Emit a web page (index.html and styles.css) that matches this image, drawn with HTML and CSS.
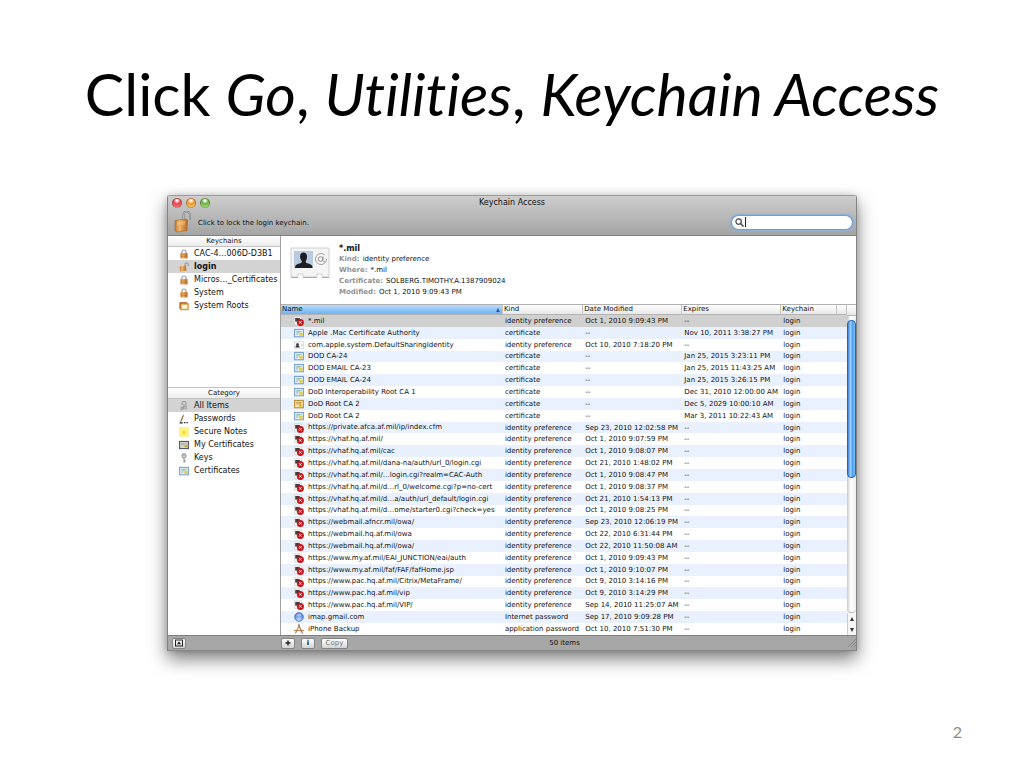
FILE: index.html
```html
<!DOCTYPE html>
<html lang="en">
<head>
<meta charset="utf-8">
<title>Click Go, Utilities, Keychain Access</title>
<link rel="stylesheet" href="styles.css">
</head>
<body>
<svg class="defs" aria-hidden="true">
  <defs>
    <linearGradient id="gold" x1="0" x2="1"><stop offset="0" stop-color="#c87a2c"/><stop offset=".35" stop-color="#efb56c"/><stop offset="1" stop-color="#b96a22"/></linearGradient>
    <radialGradient id="globe" cx=".5" cy=".75" r=".7"><stop offset="0" stop-color="#c4dcff"/><stop offset="1" stop-color="#3b6fd0"/></radialGradient>
    <symbol id="lock" viewBox="0 0 10 10"><path d="M3 5V3a2 2 0 0 1 4 0v2" fill="none" stroke="#999" stroke-width="1.2"/><rect x="1.5" y="4" width="7" height="5.4" rx=".5" fill="url(#gold)"/><path d="M1.5 6h7M1.5 7.6h7" stroke="#a9622a" stroke-width=".4"/></symbol>
    <symbol id="unlock" viewBox="0 0 10 10"><path d="M6 5V2.4a1.6 1.6 0 0 1 3.2 0V4" fill="none" stroke="#888" stroke-width="1"/><path d="M.6 4.4l6.4-.6.4 5-6.4.8z" fill="url(#gold)"/></symbol>
    <symbol id="roots" viewBox="0 0 12 10"><rect x=".6" y=".6" width="9" height="8" rx="1" fill="#b4471c"/><rect x="1.6" y="1.6" width="9.6" height="8" rx=".6" fill="#e4a63a" stroke="#a8641c" stroke-width=".6"/><rect x="3.4" y="3.6" width="6.6" height="4.8" fill="#fff8e4"/></symbol>
    <symbol id="all" viewBox="0 0 10 10"><path d="M3 4V2.4a2 2 0 0 1 4 0V9M5 4.4L3 9M5 3v5" fill="none" stroke="#999" stroke-width="1.1"/><circle cx="3" cy="7.4" r="1.4" fill="#bbb" stroke="#888" stroke-width=".6"/></symbol>
    <symbol id="pass" viewBox="0 0 10 10"><path d="M4.6.6L1.4 8.4" stroke="#b58b4b" stroke-width="1.1"/><path d="M4.2 2L2 7" stroke="#444" stroke-width=".6"/><path d="M.6 8.8h3.2M5 8.6h1.4M7.4 8.6h1.4" stroke="#222" stroke-width="1.3"/></symbol>
    <symbol id="note" viewBox="0 0 10 10"><rect x=".4" y=".4" width="9.2" height="9.2" fill="#fff47c" stroke="#efe58a" stroke-width=".5"/><path d="M3.4 4.4h3.2v2.8H3.4zM4 4.4a1 1 0 0 1 2 0" fill="#f5d93c"/></symbol>
    <symbol id="mycert" viewBox="0 0 10 10"><rect x=".6" y="1.4" width="8.8" height="7.2" fill="#d6d8c8" stroke="#444b5c"/><path d="M2 3.4h6M2 4.8h4" stroke="#8b98ac" stroke-width=".6"/><circle cx="7" cy="6.2" r="1.4" fill="#cfa92c"/></symbol>
    <symbol id="key" viewBox="0 0 10 10"><circle cx="5" cy="2.8" r="2.1" fill="#ddd" stroke="#8b8b8b"/><path d="M5 5v4.6M5 7.2h1.6M5 8.8h1.4" stroke="#8b8b8b"/><path d="M4.4 2.2h1.2" stroke="#666" stroke-width=".8"/></symbol>
    <symbol id="cert" viewBox="0 0 10 10"><rect x=".6" y="1.4" width="8.8" height="7.4" fill="#e4efff" stroke="#7099cf"/><path d="M2.2 3.4h5.6M2.2 4.8h3.6M2.2 6.2h2" stroke="#7fae82" stroke-width=".7"/><circle cx="7" cy="6.2" r="1.7" fill="#e6cf31"/></symbol>
    <symbol id="goldcert" viewBox="0 0 10 10"><rect x=".6" y="1.4" width="8.8" height="7.4" fill="#f8e3a0" stroke="#b9882c"/><path d="M2.2 3.4h5.6M2.2 4.8h5" stroke="#a8823a" stroke-width=".7"/><circle cx="6.4" cy="6.4" r="1.5" fill="#e9b52c"/></symbol>
    <symbol id="card" viewBox="0 0 10 10"><rect x=".4" y="1.4" width="9.2" height="7.4" fill="#fff" stroke="#ccc" stroke-width=".6"/><path d="M1.4 7.400c0-1.400.8-1.600 1.200-1.800a1.300 1.500 0 1 1 1.800 0c.6.2 1.200.5 1.200 1.800z" fill="#333"/><path d="M6.800 5h2" stroke="#999" stroke-width=".7"/></symbol>
    <symbol id="bad" viewBox="0 0 10 10"><path d="M.3.700h7.400v8H.3z" fill="#f3f3f3" stroke="#ccc" stroke-width=".6"/><path d="M1.200 2h4.600v3.600H1.200z" fill="#4a3a3c"/><circle cx="6.400" cy="6.400" r="3.500" fill="#c4151c"/><path d="M5.200 5.200l2.400 2.400M7.600 5.200L5.200 7.600" stroke="#fff" stroke-width="1"/></symbol>
    <symbol id="at" viewBox="0 0 10 10"><circle cx="5" cy="5" r="4.4" fill="url(#globe)" stroke="#3c62ad" stroke-width=".6"/><ellipse cx="5" cy="2.8" rx="2.6" ry="1.5" fill="#fff" opacity=".4"/></symbol>
    <symbol id="app" viewBox="0 0 10 10"><path d="M5.6.6L1.4 9.4" stroke="#d08d4c" stroke-width="1.2"/><path d="M4.4.6l4.2 8.8" stroke="#8f6a5a" stroke-width="1.1"/><path d="M0 6.6h10" stroke="#b97945" stroke-width="1"/></symbol>
  </defs>
</svg>
<main class="slide">
  <h1 class="slide-title">Click <em>Go</em>, <em>Utilities</em>, <em>Keychain Access</em></h1>

  <section class="window" aria-label="Keychain Access">
    <header class="toolbar">
      <div class="titlebar">
        <div class="lights">
          <button class="light red" aria-label="Close"></button>
          <button class="light amber" aria-label="Minimize"></button>
          <button class="light green" aria-label="Zoom"></button>
        </div>
        <h2 class="window-title">Keychain Access</h2>
      </div>
      <div class="tools">
        <button class="lock-button">
          <svg class="big-lock" viewBox="0 0 20 22" aria-hidden="true"><path d="M9.500 10V3.800a3.200 3.200 0 0 1 6.400 0V9" fill="none" stroke="#777" stroke-width="1.800"/><path d="M9.500 10V3.800a3.200 3.200 0 0 1 6.400 0V9" fill="none" stroke="#d4d4d4" stroke-width=".7"/><path d="M1 9.500l10-1.500 2.500 1-.5 10.500-10 1.500-2-1.500z" fill="url(#gold)" stroke="#9c5a1e" stroke-width=".5"/><path d="M3 11l8-1v3.500L3 14.500z" fill="#f8cb8b" opacity=".5"/></svg>
          <span>Click to lock the login keychain.</span>
        </button>
        <label class="search">
          <svg viewBox="0 0 10 10" aria-hidden="true"><circle cx="4" cy="4" r="3" fill="none" stroke="#444" stroke-width="1.300"/><path d="M6 6l3.500 3.500" stroke="#444" stroke-width="1.600"/></svg>
          <span class="caret"></span>
          <input type="text" aria-label="Search">
        </label>
      </div>
    </header>

    <div class="body">
      <nav class="sidebar">
        <section class="keychains">
          <h3 class="side-head">Keychains</h3>
          <ul class="side-list">
            <li><a href="#"><svg><use href="#lock"/></svg>CAC-4…006D-D3B1</a></li>
            <li><a href="#" class="current strong"><svg><use href="#unlock"/></svg>login</a></li>
            <li><a href="#"><svg><use href="#lock"/></svg>Micros…_Certificates</a></li>
            <li><a href="#"><svg><use href="#lock"/></svg>System</a></li>
            <li><a href="#"><svg><use href="#roots"/></svg>System Roots</a></li>
          </ul>
        </section>
        <section class="category">
          <h3 class="side-head">Category</h3>
          <ul class="side-list">
            <li><a href="#" class="current"><svg><use href="#all"/></svg>All Items</a></li>
            <li><a href="#"><svg><use href="#pass"/></svg>Passwords</a></li>
            <li><a href="#"><svg><use href="#note"/></svg>Secure Notes</a></li>
            <li><a href="#"><svg><use href="#mycert"/></svg>My Certificates</a></li>
            <li><a href="#"><svg><use href="#key"/></svg>Keys</a></li>
            <li><a href="#"><svg><use href="#cert"/></svg>Certificates</a></li>
          </ul>
        </section>
      </nav>

      <div class="content">
        <section class="detail">
          <svg class="detail-icon" viewBox="0 0 40 32" aria-hidden="true"><path d="M1 1h38v29h-7v-3h-5v3H13v-3H8v3H1z" fill="#f4f4f4" stroke="#d0d0d0"/><path d="M1 30.500h7M13 30.500h14M32 30.500h7" stroke="#aaa"/><rect x="4" y="4" width="19" height="17" fill="#b8cbe0"/><path d="M5 21c0-3 2-4 6-5l1-1.500C9 11 9.500 5.500 13.500 5.500S18 11 15.500 14.500l1 1.500c4 1 6 2 6 5z" fill="#1c1e22"/><circle cx="31" cy="12" r="5.500" fill="none" stroke="#999" stroke-width=".9" stroke-dasharray="29 6"/><circle cx="30.500" cy="12" r="2.300" fill="none" stroke="#888" stroke-width=".9"/><path d="M33.300 9.500l-.6 4q.5 2 2.300.5" fill="none" stroke="#888" stroke-width=".9"/></svg>
          <div>
            <h3 class="detail-name">*.mil</h3>
            <dl class="facts">
              <div><dt>Kind:</dt><dd>identity preference</dd></div>
              <div><dt>Where:</dt><dd>*.mil</dd></div>
              <div><dt>Certificate:</dt><dd>SOLBERG.TIMOTHY.A.1387909024</dd></div>
              <div><dt>Modified:</dt><dd>Oct 1, 2010 9:09:43 PM</dd></div>
            </dl>
          </div>
        </section>

        <div class="list">
          <table class="items">
            <colgroup><col class="c-name"><col class="c-kind"><col class="c-date"><col class="c-date"><col class="c-chain"><col class="c-end"></colgroup>
            <thead><tr><th class="sorted"><span>Name</span></th><th>Kind</th><th>Date Modified</th><th>Expires</th><th>Keychain</th><th></th></tr></thead>
            <tbody>
              <tr class="selected"><td><svg><use href="#bad"/></svg>*.mil</td><td>identity preference</td><td>Oct 1, 2010 9:09:43 PM</td><td>--</td><td>login</td><td></td></tr>
              <tr><td><svg><use href="#cert"/></svg>Apple .Mac Certificate Authority</td><td>certificate</td><td>--</td><td>Nov 10, 2011 3:38:27 PM</td><td>login</td><td></td></tr>
              <tr><td><svg><use href="#card"/></svg>com.apple.system.DefaultSharingIdentity</td><td>identity preference</td><td>Oct 10, 2010 7:18:20 PM</td><td>--</td><td>login</td><td></td></tr>
              <tr><td><svg><use href="#cert"/></svg>DOD CA-24</td><td>certificate</td><td>--</td><td>Jan 25, 2015 3:23:11 PM</td><td>login</td><td></td></tr>
              <tr><td><svg><use href="#cert"/></svg>DOD EMAIL CA-23</td><td>certificate</td><td>--</td><td>Jan 25, 2015 11:43:25 AM</td><td>login</td><td></td></tr>
              <tr><td><svg><use href="#cert"/></svg>DOD EMAIL CA-24</td><td>certificate</td><td>--</td><td>Jan 25, 2015 3:26:15 PM</td><td>login</td><td></td></tr>
              <tr><td><svg><use href="#cert"/></svg>DoD Interoperability Root CA 1</td><td>certificate</td><td>--</td><td>Dec 31, 2010 12:00:00 AM</td><td>login</td><td></td></tr>
              <tr><td><svg><use href="#goldcert"/></svg>DoD Root CA 2</td><td>certificate</td><td>--</td><td>Dec 5, 2029 10:00:10 AM</td><td>login</td><td></td></tr>
              <tr><td><svg><use href="#cert"/></svg>DoD Root CA 2</td><td>certificate</td><td>--</td><td>Mar 3, 2011 10:22:43 AM</td><td>login</td><td></td></tr>
              <tr><td><svg><use href="#bad"/></svg>https://private.afca.af.mil/ip/index.cfm</td><td>identity preference</td><td>Sep 23, 2010 12:02:58 PM</td><td>--</td><td>login</td><td></td></tr>
              <tr><td><svg><use href="#bad"/></svg>https://vhaf.hq.af.mil/</td><td>identity preference</td><td>Oct 1, 2010 9:07:59 PM</td><td>--</td><td>login</td><td></td></tr>
              <tr><td><svg><use href="#bad"/></svg>https://vhaf.hq.af.mil/cac</td><td>identity preference</td><td>Oct 1, 2010 9:08:07 PM</td><td>--</td><td>login</td><td></td></tr>
              <tr><td><svg><use href="#bad"/></svg>https://vhaf.hq.af.mil/dana-na/auth/url_0/login.cgi</td><td>identity preference</td><td>Oct 21, 2010 1:48:02 PM</td><td>--</td><td>login</td><td></td></tr>
              <tr><td><svg><use href="#bad"/></svg>https://vhaf.hq.af.mil/…login.cgi?realm=CAC-Auth</td><td>identity preference</td><td>Oct 1, 2010 9:08:47 PM</td><td>--</td><td>login</td><td></td></tr>
              <tr><td><svg><use href="#bad"/></svg>https://vhaf.hq.af.mil/d…rl_0/welcome.cgi?p=no-cert</td><td>identity preference</td><td>Oct 1, 2010 9:08:37 PM</td><td>--</td><td>login</td><td></td></tr>
              <tr><td><svg><use href="#bad"/></svg>https://vhaf.hq.af.mil/d…a/auth/url_default/login.cgi</td><td>identity preference</td><td>Oct 21, 2010 1:54:13 PM</td><td>--</td><td>login</td><td></td></tr>
              <tr><td><svg><use href="#bad"/></svg>https://vhaf.hq.af.mil/d…ome/starter0.cgi?check=yes</td><td>identity preference</td><td>Oct 1, 2010 9:08:25 PM</td><td>--</td><td>login</td><td></td></tr>
              <tr><td><svg><use href="#bad"/></svg>https://webmail.afncr.mil/owa/</td><td>identity preference</td><td>Sep 23, 2010 12:06:19 PM</td><td>--</td><td>login</td><td></td></tr>
              <tr><td><svg><use href="#bad"/></svg>https://webmail.hq.af.mil/owa</td><td>identity preference</td><td>Oct 22, 2010 6:31:44 PM</td><td>--</td><td>login</td><td></td></tr>
              <tr><td><svg><use href="#bad"/></svg>https://webmail.hq.af.mil/owa/</td><td>identity preference</td><td>Oct 22, 2010 11:50:08 AM</td><td>--</td><td>login</td><td></td></tr>
              <tr><td><svg><use href="#bad"/></svg>https://www.my.af.mil/EAI_JUNCTION/eai/auth</td><td>identity preference</td><td>Oct 1, 2010 9:09:43 PM</td><td>--</td><td>login</td><td></td></tr>
              <tr><td><svg><use href="#bad"/></svg>https://www.my.af.mil/faf/FAF/fafHome.jsp</td><td>identity preference</td><td>Oct 1, 2010 9:10:07 PM</td><td>--</td><td>login</td><td></td></tr>
              <tr><td><svg><use href="#bad"/></svg>https://www.pac.hq.af.mil/Citrix/MetaFrame/</td><td>identity preference</td><td>Oct 9, 2010 3:14:16 PM</td><td>--</td><td>login</td><td></td></tr>
              <tr><td><svg><use href="#bad"/></svg>https://www.pac.hq.af.mil/vip</td><td>identity preference</td><td>Oct 9, 2010 3:14:29 PM</td><td>--</td><td>login</td><td></td></tr>
              <tr><td><svg><use href="#bad"/></svg>https://www.pac.hq.af.mil/VIP/</td><td>identity preference</td><td>Sep 14, 2010 11:25:07 AM</td><td>--</td><td>login</td><td></td></tr>
              <tr><td><svg><use href="#at"/></svg>imap.gmail.com</td><td>Internet password</td><td>Sep 17, 2010 9:09:28 PM</td><td>--</td><td>login</td><td></td></tr>
              <tr><td><svg><use href="#app"/></svg>iPhone Backup</td><td>application password</td><td>Oct 10, 2010 7:51:30 PM</td><td>--</td><td>login</td><td></td></tr>
            </tbody>
          </table>
          <div class="scroll">
            <div class="scroll-corner"></div>
            <div class="track"><div class="thumb"></div></div>
            <button class="arrow" aria-label="Scroll up"><svg viewBox="0 0 4 4"><path d="M2 0l2 4H0z"/></svg></button>
            <button class="arrow" aria-label="Scroll down"><svg viewBox="0 0 4 4"><path d="M2 4L0 0h4z"/></svg></button>
          </div>
        </div>
      </div>
    </div>

    <footer class="statusbar">
      <div class="status-side">
        <button class="tool" aria-label="Hide keychains"><svg viewBox="0 0 8 8"><rect x=".5" y="1" width="7" height="6" fill="none" stroke="#222"/><path d="M4 2.200l2 3H2z" fill="#222"/></svg></button>
      </div>
      <div class="status-main">
        <button class="tool" aria-label="Add"><svg viewBox="0 0 8 8"><path d="M4 1.500v5M1.500 4h5" stroke="#222" stroke-width="1.400"/></svg></button>
        <button class="tool info">i</button>
        <button class="tool copy" disabled>Copy</button>
      </div>
      <span class="count">50 items</span>
      <svg class="grip" viewBox="0 0 8 8" aria-hidden="true"><path d="M0 8l8-8M3 8l5-5M6 8l2-2" stroke="#7b7b7b" stroke-width=".7"/></svg>
    </footer>
  </section>

  <p class="page-number">2</p>
</main>
</body>
</html>
```
FILE: styles.css
```css
* { box-sizing: border-box; }

body {
  margin: 0;
  background: #fff;
  color: #111;
  font: 7px/11px "DejaVu Sans", sans-serif;
}

h1, h2, h3, p, ul, dl, dd { margin: 0; padding: 0; }

button {
  margin: 0;
  padding: 0;
  border: 0;
  background: none;
  color: inherit;
  font: inherit;
}

svg { display: block; }

.defs { position: absolute; width: 0; height: 0; }

.slide {
  display: flex;
  flex-direction: column;
  min-height: 100vh;
  padding: 58px 62px 24px;
}

.slide-title {
  color: #000;
  font: 400 59px/72px Lato, sans-serif;
  font-variant-ligatures: none;
  text-align: center;
}

.page-number {
  margin-top: auto;
  color: #8b8b8b;
  font: 16px/24px Lato, sans-serif;
  text-align: right;
}

/* Window frame */
.window {
  margin: 65px 105px 0;
  border: 1px solid #858585;
  border-top-color: #9c9c9c;
  border-radius: 3px 3px 0 0;
  background: #fff;
  box-shadow: 0 8px 18px rgba(0, 0, 0, .5), 0 0 6px rgba(0, 0, 0, .15);
}

.toolbar {
  border-bottom: 1px solid #808080;
  border-radius: 2px 2px 0 0;
  background: linear-gradient(#cdcdcd, #a5a5a5);
}

.titlebar {
  display: grid;
  grid-template-columns: 1fr auto 1fr;
  align-items: center;
  padding: 1px 4px 0;
}

.lights { display: flex; gap: 4px; }

.light {
  width: 10px;
  height: 10px;
  border: 1px solid rgba(70, 40, 20, .4);
  border-radius: 50%;
}

.red { background: radial-gradient(circle at 50% 20%, #fff 5%, #e8414a 45%, #ff8d83); }
.amber { background: radial-gradient(circle at 50% 20%, #fff 5%, #f0952c 45%, #ffe17a); }
.green { background: radial-gradient(circle at 50% 20%, #fff 5%, #5fb238 45%, #c5f58a); }

.window-title { font-size: 8px; font-weight: 400; line-height: 12px; }

.tools {
  display: flex;
  align-items: center;
  justify-content: space-between;
  height: 26px;
  padding: 0 4px 0 6px;
}

.lock-button { display: flex; align-items: center; gap: 4px; }
.lock-button span { padding-top: 3px; }
.big-lock { width: 20px; height: 22px; }

.search {
  display: flex;
  align-items: center;
  width: 120px;
  height: 13px;
  padding: 0 3px;
  border-radius: 7px;
  background: #fff;
  box-shadow: 0 0 0 1px #6f9fd4, 0 0 2px 2px #86b1e0;
}

.search svg { width: 9px; height: 9px; }
.caret { width: 1px; height: 10px; margin-left: 1px; background: #222; }

.search input {
  flex: 1;
  min-width: 0;
  height: 11px;
  padding: 0 2px;
  border: 0;
  outline: 0;
  background: none;
  font: inherit;
}

.body { display: flex; }

/* Sidebar */
.sidebar {
  display: flex;
  flex-direction: column;
  flex: 0 0 113px;
  border-right: 1px solid #a0a0a0;
}

.keychains { flex: 0 0 151px; }

.side-head {
  border-bottom: 1px solid #c4c4c4;
  background: linear-gradient(#fff, #ececec);
  font-size: 7px;
  font-weight: 400;
  line-height: 10px;
  text-align: center;
}

.category .side-head { border-top: 1px solid #c4c4c4; }

.side-list { list-style: none; }

.side-list a {
  display: flex;
  align-items: center;
  gap: 5px;
  padding-left: 11px;
  color: #111;
  font-size: 8px;
  line-height: 13px;
  text-decoration: none;
  white-space: nowrap;
}

.side-list svg { width: 10px; height: 10px; }
.side-list .current { background: #d3d3d3; }
.side-list .strong { font-weight: 700; }

/* Selected item summary */
.content { display: flex; flex: 1; flex-direction: column; min-width: 0; }

.detail {
  display: flex;
  gap: 9px;
  height: 68px;
  padding: 7px 9px;
}

.detail-icon { width: 40px; height: 32px; margin-top: 4px; }
.detail-name { font-size: 8px; line-height: 11px; }
.facts div { display: flex; gap: 3px; }
.facts dt { color: #929292; font-weight: 700; }

/* Item list */
.list { display: flex; height: 331px; border-top: 1px solid #b0b0b0; }

.items {
  flex: 1;
  min-width: 0;
  height: 330px;
  border-collapse: separate;
  border-spacing: 0;
  table-layout: fixed;
}

.c-name { width: 39.2%; }
.c-kind { width: 14.2%; }
.c-date { width: 17.5%; }
.c-chain { width: 9.8%; }
.c-end { width: 1.8%; }

.items th, .items td {
  overflow: hidden;
  padding: 0 0 0 2px;
  line-height: 10px;
  text-align: left;
  white-space: nowrap;
}

.items th {
  height: 10px;
  padding-left: 1px;
  border-right: 1px solid #c4c4c4;
  border-bottom: 1px solid #b4b4b4;
  background: linear-gradient(#fff, #e8e8e8);
  font-weight: 400;
  line-height: 9px;
}

.items .sorted { background: linear-gradient(#b9dcfa, #6fb3f3); }
.sorted span { display: flex; justify-content: space-between; align-items: center; }

.sorted span::after {
  margin-right: 2px;
  border: 2px solid transparent;
  border-top: 0;
  border-bottom: 4px solid #2c5b94;
  content: "";
}

.items td:first-child { padding-left: 13px; }
.items tbody tr:nth-child(even) { background: #e9f1fe; }
.items tbody .selected { background: #d0d0d0; }

.items td svg {
  display: inline-block;
  width: 10px;
  height: 10px;
  margin-right: 4px;
  vertical-align: middle;
}

/* Scroll bar */
.scroll { display: flex; flex: 0 0 9px; flex-direction: column; }

.scroll-corner {
  height: 11px;
  border-bottom: 1px solid #b4b4b4;
  background: linear-gradient(#fff, #e8e8e8);
}

.track {
  flex: 1;
  padding-top: 4px;
  border-bottom: 1px solid #bbb;
  border-radius: 0 0 4px 4px;
  background: linear-gradient(90deg, #c8c8c8, #fff 40%, #eee);
}

.thumb {
  height: 54%;
  border: 1px solid #2862b4;
  border-radius: 4px;
  background: linear-gradient(90deg, #3f82d6, #a8d6ff 40%, #4d9cee 60%, #79c1ff);
}

.arrow {
  display: flex;
  align-items: center;
  justify-content: center;
  height: 11px;
  border-left: 1px solid #ccc;
  background: #f6f6f6;
}

.arrow svg { width: 4px; height: 4px; fill: #333; }

/* Bottom bar */
.statusbar {
  display: grid;
  grid-template-columns: 113px 1fr auto 1fr 8px;
  align-items: center;
  height: 15px;
  border-top: 1px solid #808080;
  background: #a7a7a7;
}

.status-side { padding-left: 4px; }
.status-main { display: flex; gap: 6px; }

.tool {
  display: flex;
  align-items: center;
  justify-content: center;
  width: 14px;
  height: 11px;
  border: 1px solid #858585;
  border-radius: 2px;
  background: linear-gradient(#fff, #d4d4d4);
  line-height: 9px;
}

.tool svg { width: 8px; height: 8px; }
.info { font-weight: 700; }
.copy { width: 27px; color: #777; }
.count { font-size: 7px; }
.grip { grid-column: 5; width: 8px; height: 8px; }
```
